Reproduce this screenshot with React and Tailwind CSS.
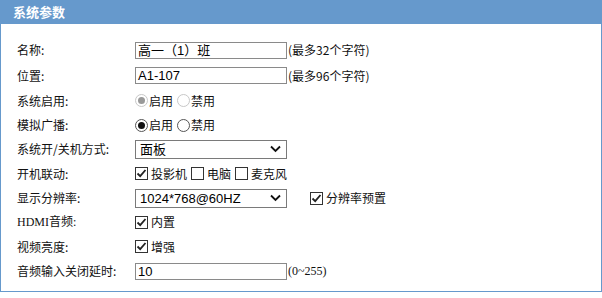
import React from 'react';

const cjk = { fontFamily: '"Noto Sans CJK SC", "Liberation Sans", sans-serif' };
const field = { fontFamily: '"Liberation Sans", "Noto Sans CJK SC", sans-serif' };

function Check({ checked = true }) {
  return (
    <span className="inline-flex w-[13px] h-[13px] border border-[#333] bg-white items-center justify-center mr-[3px]">
      {checked && (
        <svg width="11" height="11" viewBox="0 0 11 11">
          <path d="M1.5 5.5 L4.2 8.2 L9.5 2" stroke="#222" strokeWidth="1.8" fill="none" />
        </svg>
      )}
    </span>
  );
}

function Radio({ checked, disabled }) {
  const border = disabled ? 'border-[#c8c8c8]' : 'border-[#555]';
  const dot = disabled ? 'bg-[#999]' : 'bg-[#111]';
  return (
    <span className={`inline-flex w-[13px] h-[13px] rounded-full border ${border} bg-white items-center justify-center`}>
      {checked && <span className={`w-[7px] h-[7px] rounded-full ${dot}`} />}
    </span>
  );
}

function TextBox({ value }) {
  return (
    <div
      className="w-[152px] h-[17px] border border-[#8a8a8a] bg-white px-[2px] text-[13px] leading-[15px] text-black whitespace-nowrap"
      style={field}
    >
      {value}
    </div>
  );
}

function Select({ value }) {
  return (
    <div className="w-[152px] h-[19px] border border-[#7a7a7a] bg-white flex items-center justify-between pl-[4px] pr-[5px] text-[13px] text-black" style={field}>
      <span className="leading-[17px]">{value}</span>
      <svg width="11" height="8" viewBox="0 0 11 8">
        <path d="M1 1.5 L5.5 6 L10 1.5" stroke="#111" strokeWidth="1.8" fill="none" />
      </svg>
    </div>
  );
}

function Row({ label, h, children, serif }) {
  return (
    <div className={`flex items-center ${h}`}>
      <div className="w-[118px] text-[12px] text-[#111]" style={serif ? { fontFamily: '"Liberation Serif", "Noto Sans CJK SC", serif' } : cjk}>
        {label}
      </div>
      <div className="flex items-center text-[12px] text-[#111]" style={cjk}>
        {children}
      </div>
    </div>
  );
}

export default function App() {
  return (
    <div className="w-[602px] h-[298px] bg-white">
      <div className="w-[602px] h-[292px] border-x border-b border-[#6699cc] flex flex-col">
        <div className="h-[24px] bg-[#6699cc] flex items-center pl-[12px] text-white text-[13px] font-bold" style={cjk}>
          系统参数
        </div>
        <div className="pt-[13px] pl-[16px]">
          <Row label="名称:" h="h-[26px]">
            <TextBox value="高一（1）班" />
            <span className="ml-[1px]">(最多32个字符)</span>
          </Row>
          <Row label="位置:" h="h-[25px]">
            <TextBox value="A1-107" />
            <span className="ml-[1px]">(最多96个字符)</span>
          </Row>
          <Row label="系统启用:" h="h-[25px]">
            <Radio checked disabled />
            <span className="ml-[1px] mr-[4px]">启用</span>
            <Radio disabled />
            <span className="ml-[1px]">禁用</span>
          </Row>
          <Row label="模拟广播:" h="h-[24px]">
            <Radio checked />
            <span className="ml-[1px] mr-[4px]">启用</span>
            <Radio />
            <span className="ml-[1px]">禁用</span>
          </Row>
          <Row label="系统开/关机方式:" h="h-[24px]">
            <Select value="面板" />
          </Row>
          <Row label="开机联动:" h="h-[25px]">
            <Check />
            <span className="mr-[4px]">投影机</span>
            <Check checked={false} />
            <span className="mr-[4px]">电脑</span>
            <Check checked={false} />
            <span>麦克风</span>
          </Row>
          <Row label="显示分辨率:" h="h-[24px]">
            <Select value="1024*768@60HZ" />
            <span className="ml-[23px] flex items-center">
              <Check />
              <span>分辨率预置</span>
            </span>
          </Row>
          <Row label="HDMI音频:" h="h-[24px]" serif>
            <Check />
            <span>内置</span>
          </Row>
          <Row label="视频亮度:" h="h-[25px]">
            <Check />
            <span>增强</span>
          </Row>
          <Row label="音频输入关闭延时:" h="h-[24px]">
            <TextBox value="10" />
            <span className="ml-[1px]" style={{ fontFamily: '"Liberation Serif", serif' }}>(0~255)</span>
          </Row>
        </div>
      </div>
    </div>
  );
}
